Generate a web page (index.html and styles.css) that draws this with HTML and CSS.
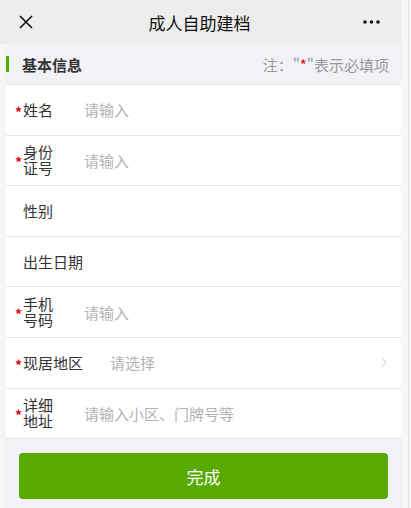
FILE: index.html
```html
<!DOCTYPE html>
<html lang="zh-CN">
<head>
    <meta charset="UTF-8">
    <meta name="viewport" content="width=device-width, initial-scale=1.0">
    <title>成人自助建档</title>
    <link rel="stylesheet" href="styles.css">
</head>
<body>
    <div class="screen">
        <div class="page">
            <div class="topbar">
                <svg class="close-icon" width="14" height="14" viewBox="0 0 14 14">
                    <path d="M1 1L13 13M13 1L1 13" stroke="#111" stroke-width="1.6" fill="none"/>
                </svg>
                <div class="topbar-title">成人自助建档</div>
                <svg class="more-icon" width="18" height="4" viewBox="0 0 18 4">
                    <circle cx="2" cy="2" r="1.8" fill="#111"/>
                    <circle cx="8.5" cy="2" r="1.8" fill="#111"/>
                    <circle cx="15" cy="2" r="1.8" fill="#111"/>
                </svg>
            </div>

            <div class="content">
                <div class="section-head">
                    <span class="section-mark"></span>
                    <span class="section-title">基本信息</span>
                    <span class="section-note">注："<span class="req">*</span>"表示必填项</span>
                </div>

                <div class="form">
                    <div class="row">
                        <span class="star">*</span>
                        <span class="label">姓名</span>
                        <span class="placeholder">请输入</span>
                    </div>
                    <div class="row">
                        <span class="star">*</span>
                        <span class="label two-line">身份<br>证号</span>
                        <span class="placeholder">请输入</span>
                    </div>
                    <div class="row">
                        <span class="star"></span>
                        <span class="label">性别</span>
                    </div>
                    <div class="row">
                        <span class="star"></span>
                        <span class="label">出生日期</span>
                    </div>
                    <div class="row">
                        <span class="star">*</span>
                        <span class="label two-line">手机<br>号码</span>
                        <span class="placeholder">请输入</span>
                    </div>
                    <div class="row">
                        <span class="star">*</span>
                        <span class="label wide">现居地区</span>
                        <span class="placeholder">请选择</span>
                        <svg class="chevron" width="6" height="11" viewBox="0 0 6 11">
                            <path d="M0.6 0.8L5 5.5L0.6 10.2" stroke="#c8c8c8" stroke-width="1" fill="none"/>
                        </svg>
                    </div>
                    <div class="row">
                        <span class="star">*</span>
                        <span class="label two-line">详细<br>地址</span>
                        <span class="placeholder">请输入小区、门牌号等</span>
                    </div>
                </div>

                <div class="footer">
                    <button class="submit">完成</button>
                </div>
            </div>
        </div>
        <div class="rail"></div>
    </div>
</body>
</html>
```

FILE: styles.css
```css
:root {
    --text-color: #333;
    --hint-color: #b2b2b2;
    --note-color: #999;
    --green: #58a900;
    --line-color: #e6e6e6;
    --soft-bg: #f0f2f5;
}

body {
    margin: 0;
    font-family: "Noto Sans CJK SC", "Noto Sans", sans-serif;
    background-color: #f5f5f5;
    color: var(--text-color);
}

.screen {
    display: flex;
    width: 411px;
    height: 508px;
    overflow: hidden;
}

.page {
    width: 401px;
    display: flex;
    flex-direction: column;
}

.rail {
    width: 7px;
    background: #f7f7f7;
    border-right: 1px solid #dedede;
}

.topbar {
    height: 44px;
    background: #ededed;
    display: flex;
    align-items: center;
    padding: 0 20px 0 19px;
}

.close-icon {
    flex: none;
}

.topbar-title {
    flex: 1;
    text-align: center;
    font-size: 17px;
    color: #111;
    margin-left: 3px;
}

.more-icon {
    flex: none;
}

.content {
    flex: 1;
    margin-left: 6px;
    background: var(--soft-bg);
    display: flex;
    flex-direction: column;
}

.section-head {
    height: 40px;
    display: flex;
    align-items: center;
    border-bottom: 1px solid var(--line-color);
    padding-right: 12px;
}

.section-mark {
    width: 3px;
    height: 16px;
    background: var(--green);
}

.section-title {
    margin-left: 13px;
    font-size: 15px;
    font-weight: bold;
    color: #333;
    flex: 1;
}

.section-note {
    font-size: 15px;
    color: var(--note-color);
}

.req {
    color: #e60012;
}

.form {
    background: white;
}

.row {
    height: 49.6px;
    display: flex;
    align-items: center;
    padding-left: 9px;
    border-bottom: 1px solid var(--line-color);
    font-size: 15px;
}

.star {
    width: 8px;
    color: #e60012;
    font-size: 14px;
    font-weight: bold;
    line-height: 14px;
    padding-top: 4px;
}

.label {
    width: 61px;
    color: var(--text-color);
}

.label.two-line {
    font-size: 15px;
    line-height: 16px;
}

.label.wide {
    width: 87px;
}

.placeholder {
    color: var(--hint-color);
    flex: 1;
}

.chevron {
    margin-right: 14px;
}

.footer {
    padding: 14px 13px 0;
}

.submit {
    width: 100%;
    height: 46px;
    border: none;
    border-radius: 4px;
    background: var(--green);
    color: white;
    font-family: inherit;
    font-size: 17px;
}
```
